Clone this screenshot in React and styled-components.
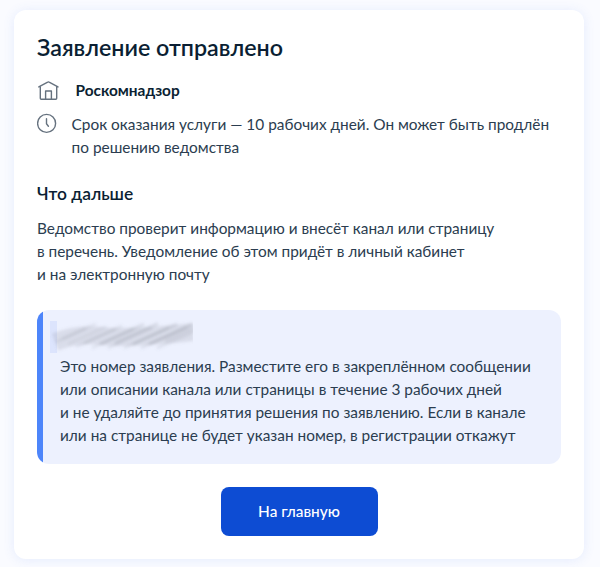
import React from 'react';
import styled, { createGlobalStyle } from 'styled-components';

const GlobalStyle = createGlobalStyle`
  body {
    margin: 0;
    background: #fafbff;
    font-family: Lato, 'Open Sans', sans-serif;
    color: #0b1f33;
  }
`;

const Page = styled.main`
  box-sizing: border-box;
  height: 567px;
  padding: 10px 16px 8px 14px;
  overflow: hidden;
`;

const Card = styled.section`
  box-sizing: border-box;
  height: 549px;
  padding: 22px 23px;
  border-radius: 12px;
  background: #ffffff;
  box-shadow: 0 1px 12px rgba(74, 120, 240, 0.12);
`;

const Title = styled.h1`
  margin: 0;
  font-size: 23.25px;
  line-height: 30px;
  font-weight: 600;
`;

const Subtitle = styled.h2`
  margin: 23px 0 0;
  font-size: 17.4px;
  line-height: 24px;
  font-weight: 600;
`;

const InfoRow = styled.div`
  display: flex;
  align-items: flex-start;
  gap: ${({ $gap }) => $gap};
  margin-top: ${({ $top }) => $top};
`;

const Icon = styled.svg`
  flex: none;
  width: 23px;
  height: 23px;
  fill: none;
  stroke: #66727f;
  stroke-width: 1.4;
  stroke-linecap: round;
  stroke-linejoin: round;
`;

const Text = styled.p`
  margin: 0;
  font-size: 15.4px;
  line-height: 23.1px;
  white-space: nowrap;
  color: ${({ $strong }) => ($strong ? '#0b1f33' : '#2b3d50')};
  font-weight: ${({ $strong }) => ($strong ? 700 : 400)};
`;

const Description = styled(Text)`
  margin-top: 11px;
`;

const Note = styled.div`
  box-sizing: border-box;
  height: 154px;
  margin-top: 23px;
  padding: 10px 17px 0 23px;
  border-radius: 12px;
  background: linear-gradient(to right, #4d85fa 6px, #edf1fe 6px);
`;

const HiddenNumber = styled.svg`
  display: block;
  width: 143px;
  height: 33px;
  margin: 0 0 2px -10px;
`;

const ButtonRow = styled.div`
  display: flex;
  justify-content: center;
  margin-top: 23px;
`;

const Button = styled.button`
  width: 157px;
  height: 49px;
  padding: 0 0 1px;
  border: 0;
  border-radius: 8px;
  background: #0d4cd3;
  color: #ffffff;
  font: 500 15.4px Lato, 'Open Sans', sans-serif;
  cursor: pointer;
`;

// x, y, length and opacity of each smudge stroke
const strokes = [
  [6, 22, 30, 0.12],
  [12, 19, 34, 0.1],
  [18, 24, 38, 0.1],
  [26, 27, 40, 0.1],
  [34, 23, 38, 0.12],
  [42, 28, 42, 0.12],
  [50, 24, 44, 0.18],
  [58, 28, 44, 0.12],
  [65, 23, 43, 0.2],
  [74, 28, 45, 0.13],
  [83, 24, 44, 0.18],
  [91, 28, 46, 0.14],
  [99, 24, 44, 0.2],
  [107, 28, 42, 0.14],
  [115, 21, 32, 0.14],
];

const App = () => (
  <>
    <GlobalStyle />
    <Page>
      <Card>
        <Title>Заявление отправлено</Title>
        <InfoRow $top="17px" $gap="15.5px">
          <Icon viewBox="0 0 23 23">
            <path d="M1.8 7.9 10.7 3.1Q11.4 2.7 12.1 3.1L21 7.9M3.3 7.2V19.3Q3.3 20.2 4.2 20.2H18.8Q19.7 20.2 19.7 19.3V7.2M8.6 20V12H14.4V20" />
          </Icon>
          <Text $strong>Роскомнадзор</Text>
        </InfoRow>
        <InfoRow $top="11px" $gap="11.6px">
          <Icon viewBox="0 0 23 23">
            <circle cx="9.6" cy="10.4" r="9" />
            <path d="M9.5 5.7V10.8L11.4 13.2" />
          </Icon>
          <Text>
            Срок оказания услуги — 10 рабочих дней. Он может быть продлён
            <br />
            по решению ведомства
          </Text>
        </InfoRow>
        <Subtitle>Что дальше</Subtitle>
        <Description>
          Ведомство проверит информацию и внесёт канал или страницу
          <br />
          в перечень. Уведомление об этом придёт в личный кабинет
          <br />
          и на электронную почту
        </Description>
        <Note>
          <HiddenNumber viewBox="0 0 143 33" aria-hidden="true">
            <defs>
              <filter id="smudge" x="-10%" y="-20%" width="120%" height="140%">
                <feGaussianBlur stdDeviation="1.4" />
              </filter>
            </defs>
            <rect width="7" height="32" y="1" fill="#dce4fd" />
            <g filter="url(#smudge)" stroke="#747985" strokeWidth="3">
              <path d="M5 22Q28 13 52 16T143 12" fill="none" strokeWidth="18" opacity="0.16" />
              {strokes.map(([x, y, length, opacity]) => (
                <path key={x} d={`M${x} ${y}l${length} ${-length * 0.45}`} opacity={opacity} />
              ))}
            </g>
          </HiddenNumber>
          <Text>
            Это номер заявления. Разместите его в закреплённом сообщении
            <br />
            или описании канала или страницы в течение 3 рабочих дней
            <br />
            и не удаляйте до принятия решения по заявлению. Если в канале
            <br />
            или на странице не будет указан номер, в регистрации откажут
          </Text>
        </Note>
        <ButtonRow>
          <Button type="button">На главную</Button>
        </ButtonRow>
      </Card>
    </Page>
  </>
);

export default App;
